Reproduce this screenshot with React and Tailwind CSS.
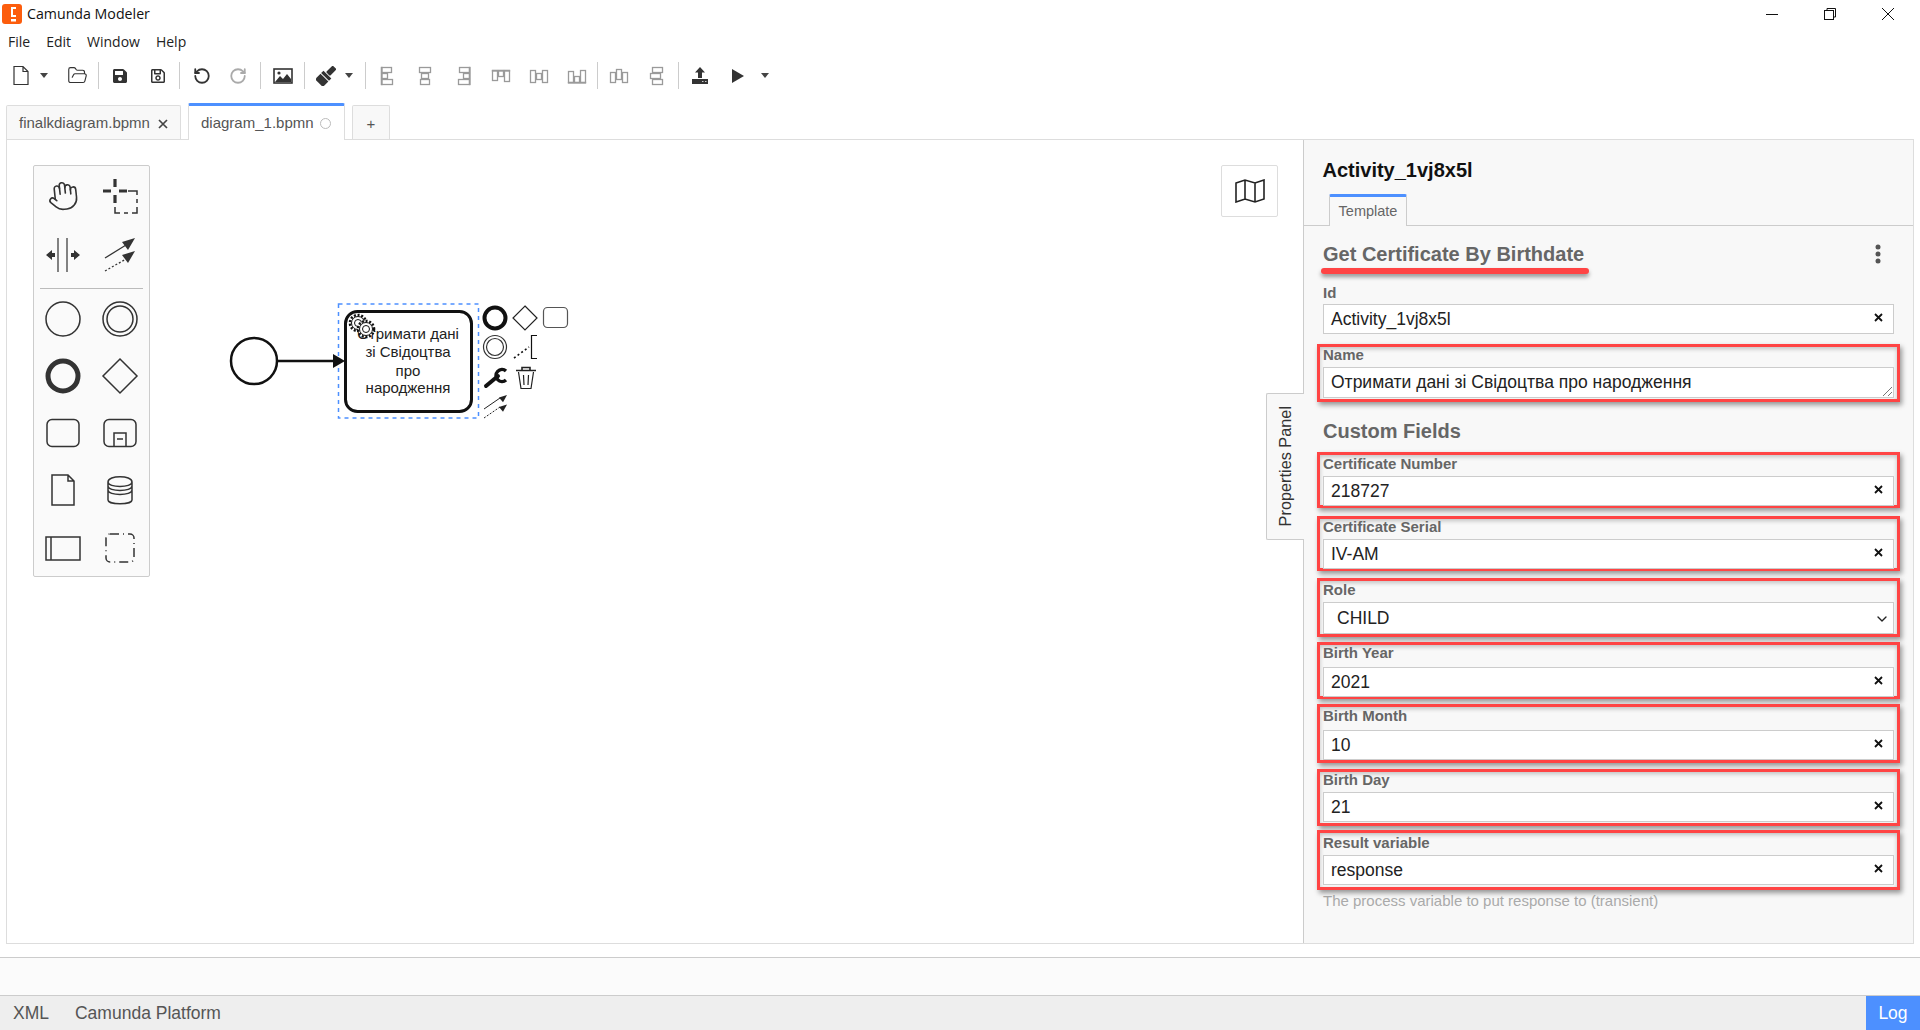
import { Hand, FolderOpen, RotateCcw, RotateCw, ChevronDown } from 'lucide-react';
import { FaSave, FaRegSave } from 'react-icons/fa';

const menus = ['File', 'Edit', 'Window', 'Help'];

const customFields = [
  { label: 'Certificate Number', value: '218727', box: 'mt-[9px] h-[56px] pt-[1px]', gap: 'mt-[4px]' },
  { label: 'Certificate Serial', value: 'IV-AM', box: 'mt-[8px] h-[55px] pt-[0px]', gap: 'mt-[4px]' },
  { label: 'Role', value: 'CHILD', box: 'mt-[7px] h-[59px] pt-[1px]', gap: 'mt-[4px]', select: true },
  { label: 'Birth Year', value: '2021', box: 'mt-[5px] h-[57px] pt-[0px]', gap: 'mt-[6px]' },
  { label: 'Birth Month', value: '10', box: 'mt-[5px] h-[59px] pt-[1px]', gap: 'mt-[6px]' },
  { label: 'Birth Day', value: '21', box: 'mt-[6px] h-[57px] pt-[0px]', gap: 'mt-[4px]' },
  { label: 'Result variable', value: 'response', box: 'mt-[4px] h-[60px] pt-[2px]', gap: 'mt-[4px]' },
];

const redBox = 'relative -mx-[6px] border-[3px] border-[#ff4444] px-[3px] shadow-[2px_3px_5px_rgba(0,0,0,0.4),inset_0_2px_4px_rgba(0,0,0,0.22)]';

const Caret = () => (
  <svg width="8" height="5" viewBox="0 0 8 5"><path d="M0 0h8L4 5z" fill="#444" /></svg>
);

const Sep = ({ className }) => <div className={`h-[27px] w-px bg-[#ccc] ${className}`} />;

const ToolBtn = ({ className = 'w-[38px]', children }) => (
  <div className={`flex h-full items-center justify-center ${className}`}>{children}</div>
);

const AlignIcon = ({ rects, w = 20, h = 20 }) => (
  <svg width={w} height={h} viewBox={`0 0 ${w} ${h}`} fill="none" stroke="#9a9a9a" strokeWidth="1.3">
    {rects.map((r, i) => (
      <rect key={i} x={r[0] + 0.5} y={r[1] + 0.5} width={r[2]} height={r[3]} />
    ))}
  </svg>
);

const alignSets = [
  [[4, 1, 10, 5], [4, 7, 6, 5], [4, 13, 11, 5], [4, 1, 0.5, 17]],
  [[4, 1, 11, 5], [6, 7, 7, 5], [5, 13, 9, 5]],
  [[6, 1, 10, 5], [10, 7, 6, 5], [5, 13, 11, 5], [16, 1, 0.5, 17]],
  [[1, 4, 5, 10], [7, 4, 5, 6], [13, 4, 5, 11], [1, 4, 17, 0.5]],
  [[1, 4, 5, 12], [7, 7, 5, 6], [13, 4, 5, 12]],
  [[1, 5, 5, 11], [7, 10, 5, 6], [13, 4, 5, 12], [1, 16, 17, 0.5]],
  [[1, 6, 5, 10], [7, 3, 5, 10], [13, 6, 5, 10]],
  [[5, 1, 10, 5], [3, 7, 10, 5], [5, 13, 10, 5]],
];

const Toolbar = () => (
  <div className="flex h-[41px] items-center pl-[7px]">
    <ToolBtn className="w-[28px]">
      <svg width="18" height="21" viewBox="0 0 18 21" fill="none" stroke="#333" strokeWidth="1.2">
        <path d="M2 1.5h9l5 5v13H2zM11 1.5v5h5" />
      </svg>
    </ToolBtn>
    <ToolBtn className="w-[18px]"><Caret /></ToolBtn>
    <ToolBtn className="ml-[5px] w-[38px]"><FolderOpen size={21} strokeWidth={1.3} color="#333" /></ToolBtn>
    <Sep className="mx-[2px]" />
    <ToolBtn><FaSave size={16} color="#333" /></ToolBtn>
    <ToolBtn><FaRegSave size={16} color="#333" /></ToolBtn>
    <Sep className="ml-[2px] mr-[4px]" />
    <ToolBtn className="w-[36px]"><RotateCcw size={18} strokeWidth={2.4} color="#333" /></ToolBtn>
    <ToolBtn className="w-[36px]"><RotateCw size={18} strokeWidth={2.4} color="#aaa" /></ToolBtn>
    <Sep className="ml-[4px] mr-[3px]" />
    <ToolBtn>
      <svg width="20" height="16" viewBox="0 0 20 16">
        <rect x="1" y="1" width="18" height="14" fill="#fff" stroke="#333" strokeWidth="1.6" />
        <path d="M2 14l5-6 3 3 4-5 4 5v3z" fill="#333" />
        <circle cx="6" cy="5" r="1.6" fill="#333" />
      </svg>
    </ToolBtn>
    <Sep className="mx-[2px]" />
    <ToolBtn className="ml-[3px] w-[32px]">
      <svg width="20" height="20" viewBox="0 0 18 18" fill="#333">
        <g transform="rotate(45 9 9)">
          <rect x="6.500" y="-2" width="5" height="8.500" rx="1" />
          <rect x="4" y="7.200" width="10" height="3" />
          <rect x="4" y="11" width="10" height="7" />
        </g>
      </svg>
    </ToolBtn>
    <ToolBtn className="w-[14px]"><Caret /></ToolBtn>
    <Sep className="ml-[9px] mr-[2px]" />
    {alignSets.slice(0, 6).map((rects, i) => (
      <ToolBtn key={i}><AlignIcon rects={rects} /></ToolBtn>
    ))}
    <Sep className="ml-[1px] mr-[2px]" />
    {alignSets.slice(6).map((rects, i) => (
      <ToolBtn key={i}><AlignIcon rects={rects} /></ToolBtn>
    ))}
    <Sep className="ml-[2px] mr-[2px]" />
    <ToolBtn>
      <svg width="18" height="17" viewBox="0 0 18 17">
        <path d="M9 0l5 5.5h-3V11H7V5.500H4z" fill="#333" />
        <path d="M1 12h16v5H1z" fill="#333" />
        <path d="M11 14.500h1.500M14 14.500h1.500" stroke="#ccc" strokeWidth="1" />
      </svg>
    </ToolBtn>
    <ToolBtn><svg width="12" height="14" viewBox="0 0 12 14"><path d="M0 0l12 7-12 7z" fill="#333" /></svg></ToolBtn>
    <ToolBtn className="ml-[1px] w-[14px]"><Caret /></ToolBtn>
  </div>
);

const Tabs = () => (
  <div className="flex h-[43px] items-end pl-[6px] text-[15px] text-[#555]">
    <div className="flex h-[34px] w-[175px] items-center rounded-t-[2px] border border-b-0 border-[#ddd] bg-[#f8f8f8] pl-[12px] pt-[2px]">
      <span>finalkdiagram.bpmn</span>
      <span className="ml-[8px] text-[#444]">
        <svg width="10" height="10" viewBox="0 0 10 10" stroke="#444" strokeWidth="1.7"><path d="M1 1l8 8M9 1l-8 8" /></svg>
      </span>
    </div>
    <div className="relative z-10 -mb-px ml-[7px] flex h-[37px] w-[157px] items-center rounded-t-[2px] border-x border-t-[3px] border-x-[#ddd] border-t-[#4d90ff] bg-white pl-[12px] pt-[1px]">
      <span>diagram_1.bpmn</span>
      <span className="ml-[6px] h-[11px] w-[11px] rounded-full border border-[#bbb]" />
    </div>
    <div className="ml-[7px] flex h-[34px] w-[38px] items-center justify-center rounded-t-[2px] border border-b-0 border-[#ddd] bg-[#f8f8f8] pt-[3px] text-[15px]">+</div>
  </div>
);

const PaletteCell = ({ children }) => (
  <div className="flex h-[57px] w-[57px] items-center justify-center">
    <svg width="44" height="44" viewBox="-22 -22 44 44" fill="none" stroke="#333" strokeWidth="1.5">{children}</svg>
  </div>
);

const Palette = () => (
  <div className="absolute left-[26px] top-[25px] h-[412px] w-[117px] rounded-[2px] border border-[#ccc] bg-[#fafafa]">
    <div className="grid h-[118px] grid-cols-2">
      <div className="flex h-[59px] items-center justify-center"><Hand size={32} strokeWidth={1.2} color="#333" className="-rotate-6" /></div>
      <div className="flex h-[59px] items-center justify-center">
        <svg width="44" height="44" viewBox="-22 -22 44 44" fill="none" stroke="#333">
          <path d="M-17-5h8M-1-5h8M-5-17v8M-5-1v8" strokeWidth="3.200" />
          <path d="M8-5H17V-1M17 3V7M17 11V17H12M8 17H4M0 17H-5V11" strokeWidth="1.500" />
        </svg>
      </div>
      <div className="flex h-[59px] items-center justify-center">
        <svg width="44" height="44" viewBox="-22 -22 44 44" fill="none" stroke="#333" strokeWidth="1.2">
          <path d="M-5-17V17M4-17V17" />
          <path d="M-17 0l6-5v3h3v4h-3v3zM17 0l-6-5v3H8v4h3v3z" fill="#333" stroke="none" />
        </svg>
      </div>
      <div className="flex h-[59px] items-center justify-center">
        <svg width="44" height="44" viewBox="-22 -22 44 44" fill="none" stroke="#333" strokeWidth="1.3">
          <path d="M-15 3L6-10" />
          <path d="M15-17L2-13l6 8z" fill="#333" stroke="none" />
          <path d="M-15 16L6 4" strokeDasharray="2 2" />
          <path d="M15-4L2 0l6 8z" fill="#333" stroke="none" />
        </svg>
      </div>
    </div>
    <div className="mx-[6px] mt-[4px] h-px bg-[#bbb]" />
    <div className="mt-[1px] grid grid-cols-2">
      <PaletteCell><circle r="17" /></PaletteCell>
      <PaletteCell><circle r="17" /><circle r="13" /></PaletteCell>
      <PaletteCell><circle r="15" strokeWidth="5" /></PaletteCell>
      <PaletteCell><path d="M0-17L17 0 0 17-17 0z" /></PaletteCell>
      <PaletteCell><rect x="-16" y="-13.500" width="32" height="27" rx="5" /></PaletteCell>
      <PaletteCell>
        <rect x="-16" y="-13.500" width="32" height="27" rx="5" />
        <path d="M-6 13.500V0H6V13.500M-3 6H3" />
      </PaletteCell>
      <PaletteCell><path d="M-11-15H5l6 6V15H-11zM5-15v6h6" /></PaletteCell>
      <PaletteCell>
        <path d="M-12-8c0-7 24-7 24 0V10c0 5-24 5-24 0zM-12-8c0 6 24 6 24 0M-12-4c0 6 24 6 24 0M-12 0c0 6 24 6 24 0" />
      </PaletteCell>
      <PaletteCell><rect x="-17" y="-10" width="34" height="23" /><path d="M-12-10V13" /></PaletteCell>
      <PaletteCell>
        <rect x="-14" y="-13" width="28" height="28" rx="4" strokeDasharray="9 4 1 4" />
      </PaletteCell>
    </div>
  </div>
);

const Gear = ({ cx, cy, r }) => (
  <g fill="#fff" stroke="#111">
    <circle cx={cx} cy={cy} r={r} strokeWidth="2.6" strokeDasharray="2 1.7" />
    <circle cx={cx} cy={cy} r={r - 1.5} strokeWidth="1" />
    <circle cx={cx} cy={cy} r={r - 4.5} strokeWidth="1" />
  </g>
);

// coordinates in the viewBox are page pixels
const Diagram = () => (
  <svg className="absolute left-0 top-0" width="1296" height="803" viewBox="7 140 1296 803" fill="none">
    <rect x="338.500" y="304" width="140" height="114" stroke="#4d90ff" strokeWidth="1.5" strokeDasharray="4 4" />
    <circle cx="254" cy="361" r="23" fill="#fff" stroke="#111" strokeWidth="2.5" />
    <path d="M277 361H335" stroke="#111" strokeWidth="2.5" />
    <path d="M345 361L333 354V368z" fill="#111" />
    <rect x="345.500" y="311.500" width="126" height="100" rx="12" fill="#fff" stroke="#111" strokeWidth="3" />
    <text x="408" y="339" textAnchor="middle" fontSize="15" fill="#222">Отримати дані</text>
    <text x="408" y="357" textAnchor="middle" fontSize="15" fill="#222">зі Свідоцтва</text>
    <text x="408" y="376" textAnchor="middle" fontSize="15" fill="#222">про</text>
    <text x="408" y="393" textAnchor="middle" fontSize="15" fill="#222">народження</text>
    <Gear cx={358} cy={323} r={8} />
    <Gear cx={366} cy={329} r={8} />
    <circle cx="495" cy="318" r="10.500" stroke="#111" strokeWidth="4" fill="#fff" />
    <path d="M525 306l12 12-12 12-12-12z" stroke="#222" strokeWidth="1.2" fill="#fff" />
    <rect x="543.500" y="307.500" width="24" height="20" rx="4" stroke="#555" strokeWidth="1.2" fill="#fff" />
    <circle cx="495" cy="347" r="11.500" stroke="#333" strokeWidth="1.2" />
    <circle cx="495" cy="347" r="8.500" stroke="#333" strokeWidth="1.2" />
    <path d="M514 358L529 347" stroke="#111" strokeWidth="1.6" strokeDasharray="2 2.500" />
    <path d="M537 335.500H531.500V358.500H537" stroke="#111" strokeWidth="1.2" />
    <path d="M486 386L498 376" stroke="#111" strokeWidth="4" strokeLinecap="round" />
    <path d="M506 371a6 6 0 1 0 0 9" stroke="#111" strokeWidth="3.500" />
    <path d="M516 370.500H536M522 370V367.500H530V370" stroke="#222" strokeWidth="1.6" />
    <path d="M518.500 372L521 388.500H531L533.500 372M523.500 375L524 385M528.500 375L528 385" stroke="#222" strokeWidth="1.2" />
    <path d="M484 409L500 398" stroke="#222" strokeWidth="1" />
    <path d="M507 395l-8 2.400 4 4.800z" fill="#222" />
    <path d="M484 418L500 407" stroke="#222" strokeWidth="1" strokeDasharray="2 1.500" />
    <path d="M507 404.500l-8 2.400 4 4.800z" fill="#222" />
  </svg>
);

const ClearIcon = () => (
  <svg className="absolute right-[10px] top-[8px]" width="9" height="9" viewBox="0 0 9 9" stroke="#111" strokeWidth="1.8">
    <path d="M1 1l7 7M8 1L1 8" />
  </svg>
);

const TextInput = ({ value, gap, select }) => (
  <div className={`relative flex items-center border border-[#ccc] bg-white text-[17.5px] text-[#222] ${select ? 'h-[32px] pl-[13px]' : 'h-[30px] pl-[7px]'} ${gap}`}>
    {value}
    {select
      ? <ChevronDown size={16} strokeWidth={2} color="#222" className="absolute right-[3px] top-[8px]" />
      : <ClearIcon />}
  </div>
);

const FieldLabel = ({ children }) => (
  <div className="h-[16px] text-[15px] font-bold leading-[16px] text-[#666]">{children}</div>
);

const PropertiesPanel = () => (
  <div className="relative h-full w-[610px] border-l border-[#ccc] bg-[#f8f8f8]">
    <div className="absolute -left-[38px] top-[253px] z-10 flex h-[147px] w-[38px] items-center justify-center rounded-l-[2px] border border-r-0 border-[#ccc] bg-[#f8f8f8]">
      <span className="rotate-180 text-[16.300px] text-[#333] [writing-mode:vertical-rl]">Properties Panel</span>
    </div>

    <div className="pl-[18.5px] pt-[18px] text-[20px] font-bold leading-[24px] text-[#111]">Activity_1vj8x5l</div>

    <div className="mt-[12px] flex h-[32px] border-b border-[#ccc] pl-[25px]">
      <div className="flex h-[32px] w-[78px] items-center justify-center rounded-t-[2px] border-x border-t-[3px] border-x-[#ccc] border-t-[#4d90ff] bg-[#f8f8f8] text-[14.500px] text-[#666]">Template</div>
    </div>

    <div className="px-[19px]">
      <div className="relative mt-[16px] flex h-[24px] items-center justify-between text-[20px] font-bold leading-[24px] text-[#666]">
        <span>Get Certificate By Birthdate</span>
        <svg width="6" height="20" viewBox="0 0 6 20" className="mr-[13px]" fill="#555">
          <circle cx="3" cy="3" r="2.500" /><circle cx="3" cy="10" r="2.500" /><circle cx="3" cy="17" r="2.500" />
        </svg>
        <div className="absolute -left-[2px] top-[26px] h-[6px] w-[268px] rounded-[3px] bg-[#ff4444] shadow-[0_3px_4px_rgba(0,0,0,0.4)]" />
      </div>

      <div className="mt-[19px]"><FieldLabel>Id</FieldLabel></div>
      <TextInput value="Activity_1vj8x5l" gap="mt-[3px]" />

      <div className={`mt-[10px] h-[58px] ${redBox}`}>
        <FieldLabel>Name</FieldLabel>
        <div className="relative mt-[4px] flex h-[31px] items-center border border-[#ccc] bg-white pl-[7px] text-[17.5px] text-[#222]">
          Отримати дані зі Свідоцтва про народження
          <svg className="absolute bottom-0 right-0" width="11" height="11" viewBox="0 0 11 11" stroke="#777" strokeWidth="1">
            <path d="M1 10L10 1M6 10l4-4" />
          </svg>
        </div>
      </div>

      <div className="mt-[17px] h-[24px] text-[20px] font-bold leading-[24px] text-[#666]">Custom Fields</div>

      {customFields.map((f) => (
        <div key={f.label} className={`${redBox} ${f.box}`}>
          <FieldLabel>{f.label}</FieldLabel>
          <TextInput value={f.value} gap={f.gap} select={f.select} />
        </div>
      ))}

      <div className="mt-[3px] h-[16px] text-[15px] leading-[16px] text-[#aaa]">The process variable to put response to (transient)</div>
    </div>
  </div>
);

const App = () => {
  return (
    <div className="flex h-[1030px] w-[1920px] flex-col overflow-hidden bg-white font-['Liberation_Sans',Arial,sans-serif]">
      <div className="flex h-[28px] items-center">
        <svg className="ml-[2px]" width="20" height="20" viewBox="0 0 20 20">
          <rect width="20" height="20" rx="3" fill="#fc5d0d" />
          <path d="M9 3h5v2h-3v6h3v2H9z" fill="#fff" />
          <rect x="9" y="15" width="5" height="2.500" fill="#fff" />
        </svg>
        <span className="ml-[5px] font-['Open_Sans',sans-serif] text-[14.2px] text-[#111]">Camunda Modeler</span>
        <div className="ml-auto flex items-center">
          <svg width="14" height="14" viewBox="0 0 14 14" stroke="#111" className="mr-[44px]"><path d="M1 7.500H13" /></svg>
          <svg width="14" height="14" viewBox="0 0 14 14" fill="none" stroke="#111" className="mr-[44px]">
            <rect x="1.500" y="3.500" width="9" height="9" /><path d="M4 3.500V1.500H12.500V10H10.500" />
          </svg>
          <svg width="14" height="14" viewBox="0 0 14 14" stroke="#111" className="mr-[25px]"><path d="M1 1L13 13M13 1L1 13" /></svg>
        </div>
      </div>

      <div className="flex h-[27px] items-center gap-[16px] pl-[8px] font-['Open_Sans',sans-serif] text-[14px] text-[#222]">
        {menus.map((m) => <span key={m}>{m}</span>)}
      </div>

      <Toolbar />
      <Tabs />

      <div className="ml-[6px] flex h-[805px] w-[1908px] border border-[#ddd]">
        <div className="relative flex-1 bg-white">
          <Diagram />
          <Palette />
          <div className="absolute left-[1214px] top-[25px] flex h-[52px] w-[57px] items-center justify-center rounded-[2px] border border-[#ddd] bg-white">
            <svg width="30" height="24" viewBox="0 0 30 24" fill="none" stroke="#222" strokeWidth="1.600">
              <path d="M1 4L10 1l10 3 9-3V20l-9 3-10-3-9 3zM10 1V20M20 4V23" />
            </svg>
          </div>
        </div>
        <PropertiesPanel />
      </div>

      <div className="mt-[13px] h-[38px] border-t border-[#ccc] bg-[#fbfbfb]" />

      <div className="flex h-[35px] items-center border-t border-[#ccc] bg-[#eee] text-[17.5px] text-[#555]">
        <span className="ml-[13px]">XML</span>
        <span className="ml-[26px]">Camunda Platform</span>
        <div className="ml-auto flex h-full w-[54px] items-center justify-center bg-[#4d90ff] text-white">Log</div>
      </div>
    </div>
  );
};

export default App;
